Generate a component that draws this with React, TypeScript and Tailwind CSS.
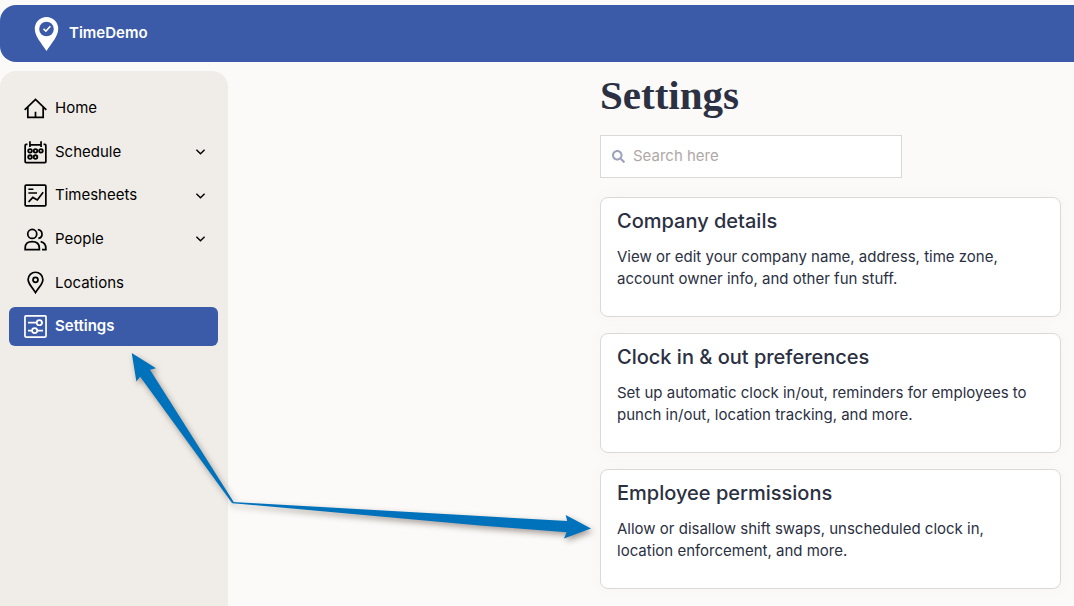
import type { ReactNode } from "react";
import { FaSearch } from "react-icons/fa";

const iconProps = {
  width: 23,
  height: 23,
  viewBox: "0 0 24 24",
  fill: "none",
  stroke: "currentColor",
  strokeWidth: 1.8,
  className: "shrink-0",
  "aria-hidden": true,
} as const;

const HomeIcon = () => (
  <svg {...iconProps}>
    <path d="M.7 13.4 12 2.6 23.3 13.4M4 10.5V21.2H20V10.5M12 21V15.5" />
  </svg>
);

const ScheduleIcon = () => (
  <svg {...iconProps}>
    <path d="M3.6 3.5H2.2Q1.2 3.5 1.2 4.6V21.6Q1.2 22.6 2.2 22.6H21.8Q22.8 22.6 22.8 21.6V4.6Q22.8 3.5 21.8 3.5H20.4M6.2 4H17.8M6.2.2V6.2M17.8.2V6.2" />
    <g strokeWidth="1.9">
      <circle cx="6.3" cy="10.3" r="1.9" />
      <circle cx="12" cy="10.3" r="1.9" />
      <circle cx="17.7" cy="10.3" r="1.9" />
      <circle cx="6.3" cy="16.8" r="1.9" />
      <circle cx="12" cy="16.8" r="1.9" />
    </g>
  </svg>
);

const TimesheetsIcon = () => (
  <svg {...iconProps}>
    <rect x="1.2" y="1.2" width="21.6" height="21.6" rx="1" />
    <path d="M4.6 5.4H9.8M4.6 9.4H13.6" strokeWidth="1.5" />
    <path d="m4.8 18.8 4.4-4.8 4.7 2.6 6.1-7.9" />
  </svg>
);

const PeopleIcon = () => (
  <svg {...iconProps}>
    <circle cx="8.6" cy="6.2" r="4.7" />
    <path d="M1.2 22.6V21Q1.2 14.2 8.6 14.2T16 21V22.6ZM14.4 1.6A4.7 4.7 0 0 1 15 10.9M17.4 14.3Q22.8 15.4 22.8 21.5V22.6H18.8" />
  </svg>
);

const LocationsIcon = () => (
  <svg {...iconProps}>
    <path d="M12 22.6C9.2 18 4.3 13.3 4.3 9A7.7 7.7 0 0 1 19.7 9C19.7 13.3 14.8 18 12 22.6Z" />
    <circle cx="12" cy="9.2" r="2.6" />
  </svg>
);

const SettingsIcon = () => (
  <svg {...iconProps}>
    <rect x="1" y="1" width="22" height="22" rx="1" />
    <path d="M4.2 8H13.2M18.8 8H19.8M4.2 16.3H8.2M14 16.3H19.8" />
    <circle cx="16" cy="8" r="2.7" />
    <circle cx="11.1" cy="16.3" r="2.7" />
  </svg>
);

const Chevron = () => (
  <svg width="11" height="8" viewBox="0 0 11 8" fill="none" stroke="currentColor" strokeWidth="1.4" aria-hidden="true">
    <path d="m1.4 1.8 4.1 4 4.1-4" />
  </svg>
);

const navItems: { label: string; icon: ReactNode; expands?: boolean; active?: boolean }[] = [
  { label: "Home", icon: <HomeIcon /> },
  { label: "Schedule", icon: <ScheduleIcon />, expands: true },
  { label: "Timesheets", icon: <TimesheetsIcon />, expands: true },
  { label: "People", icon: <PeopleIcon />, expands: true },
  { label: "Locations", icon: <LocationsIcon /> },
  { label: "Settings", icon: <SettingsIcon />, active: true },
];

const cards = [
  {
    title: "Company details",
    text: "View or edit your company name, address, time zone, account owner info, and other fun stuff.",
  },
  {
    title: "Clock in & out preferences",
    text: "Set up automatic clock in/out, reminders for employees to punch in/out, location tracking, and more.",
  },
  {
    title: "Employee permissions",
    text: "Allow or disallow shift swaps, unscheduled clock in, location enforcement, and more.",
  },
];

const rowClass = "flex h-[39px] w-full items-center gap-2 rounded-md pr-3 pl-[15px] text-left text-[15px]";

export default function App() {
  return (
    <div className="relative flex min-h-screen flex-col overflow-hidden bg-[#fbfaf8] pt-[5px] font-['Inter',sans-serif] text-[#2b3042]">
      <header className="flex h-[57px] items-center rounded-l-2xl bg-[#3b5ba9] px-[34px] text-white">
        <a href="#" className="flex items-center gap-[10px] text-[15px] font-semibold">
          <svg width="25" height="34" viewBox="0 0 25 34" aria-hidden="true">
            <path d="M12.5 0A11.8 11.8 0 0 0 .8 12C.8 19 7.3 26 12.5 34 17.7 26 24.2 19 24.2 12A11.8 11.8 0 0 0 12.5 0Z" fill="#fff" />
            <circle cx="12.5" cy="12" r="7.3" fill="#3b5ba9" />
            <path d="m9.5 11.8 2.4 2.3 4.5-4.8" fill="none" stroke="#fff" strokeWidth="1.6" />
          </svg>
          TimeDemo
        </a>
      </header>

      <div className="mt-[9px] flex flex-1">
        <aside className="w-[228px] shrink-0 rounded-t-2xl bg-[#f0ede8] pt-[18px] pr-[10px] pl-[9px] text-black">
          <nav aria-label="Main">
            <ul className="flex h-[257px] flex-col justify-between">
              {navItems.map((item) => (
                <li key={item.label}>
                  {item.expands ? (
                    <button type="button" aria-expanded="false" className={rowClass}>
                      {item.icon}
                      <span className="flex-1">{item.label}</span>
                      <Chevron />
                    </button>
                  ) : (
                    <a
                      href="#"
                      aria-current={item.active ? "page" : undefined}
                      className={item.active ? `${rowClass} bg-[#3b5ba9] font-semibold text-white` : rowClass}
                    >
                      {item.icon}
                      {item.label}
                    </a>
                  )}
                </li>
              ))}
            </ul>
          </nav>
        </aside>

        <main className="flex flex-1 justify-end pr-[13px]">
          <div className="w-full max-w-[461px]">
            <h1 className="font-['Liberation_Serif',serif] text-[41px] leading-[48px] font-bold">Settings</h1>

            <label className="mt-4 flex h-[43px] w-[302px] items-center gap-2 border border-[#dcd8d8] bg-white px-[11px]">
              <FaSearch className="size-[13px] text-[#9da3bd]" aria-hidden="true" />
              <input
                type="search"
                aria-label="Search settings"
                placeholder="Search here"
                className="min-w-0 flex-1 bg-transparent text-[15px] outline-none placeholder:text-[#b0a8a6]"
              />
            </label>

            <div className="mt-[19px] flex flex-col gap-4">
              {cards.map((card) => (
                <a
                  key={card.title}
                  href="#"
                  className="block min-h-[120px] rounded-lg border border-[#dcd8d8] bg-white px-4 pt-[9px] pb-4 shadow-[0_0_16px_rgba(120,100,80,0.03)]"
                >
                  <h2 className="text-[20px] leading-[28px] font-medium">{card.title}</h2>
                  <p className="mt-[11px] text-[15px] leading-[22px]">{card.text}</p>
                </a>
              ))}
            </div>
          </div>
        </main>
      </div>

      {/* Callout arrows */}
      <svg
        className="pointer-events-none absolute top-0 left-0 drop-shadow-[2px_3px_3px_rgba(60,40,30,0.45)]"
        width="610"
        height="560"
        viewBox="0 0 610 560"
        fill="#0072bc"
        aria-hidden="true"
      >
        <path d="M131.7 353 156 368.3 150 369.7 234 502.4 232 503 140.2 376.7 136.4 381.5Z" />
        <path d="M232.5 502 480 516 567.2 521 565.7 515 591 528.4 564 538.6 566.6 532.3 480 525.4 232.5 503.2Z" />
      </svg>
    </div>
  );
}
